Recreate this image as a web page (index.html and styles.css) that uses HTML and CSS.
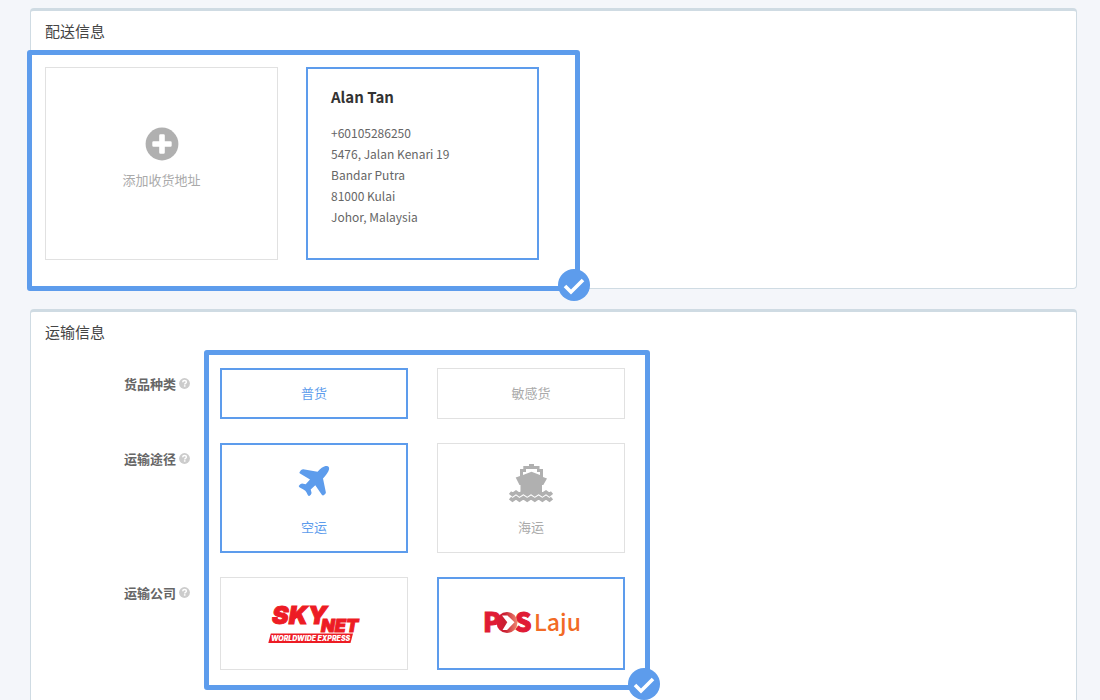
FILE: index.html
```html
<!DOCTYPE html>
<html lang="zh-CN">
<head>
<meta charset="utf-8">
<meta name="viewport" content="width=device-width, initial-scale=1">
<title>配送信息</title>
<link rel="stylesheet" href="styles.css">
</head>
<body>
<svg class="sprite" aria-hidden="true">
  <symbol id="check" viewBox="0 0 32 32"><path d="M7 17l6 6L25 11" fill="none" stroke="#fff" stroke-width="3.6"/></symbol>
  <symbol id="help" viewBox="0 0 11 11"><circle cx="5.500" cy="5.500" r="5.400" fill="#ccc"/><path d="M3.700 4.300q.1-1.700 1.900-1.700 1.800 0 1.800 1.500 0 .8-.9 1.300-.8.400-.8 1.100" fill="none" stroke="#fff" stroke-width="1.500"/><path d="M4.900 7.200h1.600v1.500H4.900z" fill="#fff"/></symbol>
</svg>
<main class="page">
  <section class="panel">
    <h2 class="panel-title">配送信息</h2>
    <div class="frame frame-address">
      <button type="button" class="option address add">
        <svg class="plus" viewBox="0 0 34 34" aria-hidden="true"><circle cx="17" cy="17" r="16.400" fill="#b0b0b0"/><path d="M14.200 8.500q0-1.200 1.200-1.200h3.200q1.200 0 1.200 1.200v5.700h5.700q1.200 0 1.200 1.200v3.200q0 1.200-1.200 1.200h-5.700v5.700q0 1.200-1.200 1.200h-3.200q-1.200 0-1.200-1.200v-5.700H8.500q-1.200 0-1.200-1.200v-3.200q0-1.200 1.200-1.200h5.700z" fill="#fff"/></svg>
        <span>添加收货地址</span>
      </button>
      <button type="button" class="option address details selected" aria-pressed="true">
        <strong class="name">Alan Tan</strong>
        <span>+60105286250</span>
        <span>5476, Jalan Kenari 19</span>
        <span>Bandar Putra</span>
        <span>81000 Kulai</span>
        <span>Johor, Malaysia</span>
      </button>
      <svg class="badge"><use href="#check"/></svg>
    </div>
  </section>

  <section class="panel">
    <h2 class="panel-title">运输信息</h2>
    <div class="shipping">
      <div class="rows labels">
        <div class="label">货品种类<svg class="help"><use href="#help"/></svg></div>
        <div class="label">运输途径<svg class="help"><use href="#help"/></svg></div>
        <div class="label">运输公司<svg class="help"><use href="#help"/></svg></div>
      </div>
      <div class="frame rows frame-shipping">
        <div class="choices" role="group" aria-label="货品种类">
          <button type="button" class="option goods selected" aria-pressed="true">普货</button>
          <button type="button" class="option goods" aria-pressed="false">敏感货</button>
        </div>
        <div class="choices" role="group" aria-label="运输途径">
          <button type="button" class="option transport selected" aria-pressed="true">
            <svg class="transport-icon" viewBox="-6 -2 44 40" aria-hidden="true"><path d="M1.500 7.300Q3 4 5.200 4.200L19.500 6.700Q24 1.800 27.500 1Q31.800 .3 31 4.500Q30 8 25 13.500L27.900 27.500Q28 29 25.200 30.500Q24.300 30.600 23.800 29.700L17.300 20.200L12.700 24.400L13.600 28Q13.200 30 11.300 31Q10.200 31 9.500 29.500Q8.700 27.200 7.300 25.800Q5.300 24 2.200 22.700Q.8 22 .7 21Q2.200 18.700 4 18.400L7.700 19.200L12 14.600L2 8.600Q1.200 8 1.500 7.300z" fill="#5d9cec"/></svg>
            <span>空运</span>
          </button>
          <button type="button" class="option transport" aria-pressed="false">
            <svg class="transport-icon" viewBox="0 0 44 40" aria-hidden="true"><path d="M20 1h5v2h5.500v3H34v8l4 1.500L34.300 22H33v9H11.500v-9h-1L6.700 14.500 11 13V6h3.300V3H20z" fill="#b0b0b0"/><path d="M14 12V9h3V6h11v3h3v3l-8.500-3.200z" fill="#fff"/><path d="M1 29.600l2.500 2 3.500-2.500 3.500 2.500 3.900-2.500 3.800 2.500 3.800-2.500 3.800 2.500 3.800-2.500 3.800 2.500 3.600-2.500 3.500 2.500 2.500-2M1 35.100l2.500 2 3.500-2.500 3.500 2.500 3.900-2.500 3.800 2.500 3.800-2.500 3.800 2.500 3.800-2.500 3.800 2.500 3.600-2.500 3.500 2.500 2.500-2" fill="none" stroke="#b0b0b0" stroke-width="3.600"/></svg>
            <span>海运</span>
          </button>
        </div>
        <div class="choices" role="group" aria-label="运输公司">
          <button type="button" class="option" aria-pressed="false">
            <svg class="skynet" viewBox="0 0 92 38" role="img" aria-label="SkyNet Worldwide Express">
              <text x="4" y="19" class="sky">SKY</text>
              <text x="53" y="27" class="net">NET</text>
              <path d="M2.800 28.500H85l-2.500 9.500H.3z" fill="#ed1c24"/>
              <text x="3" y="35.800" class="worldwide">WORLDWIDE EXPRESS</text>
            </svg>
          </button>
          <button type="button" class="option selected" aria-pressed="true">
            <svg class="poslaju" viewBox="0 0 96 30" role="img" aria-label="Pos Laju">
              <defs><linearGradient id="globe"><stop offset="0" stop-color="#e01b35"/><stop offset=".4" stop-color="#c81f32"/><stop offset="1" stop-color="#ee8a72"/></linearGradient></defs>
              <text x="0" y="23" class="pos">P</text>
              <text x="32" y="23" class="pos">S</text>
              <circle cx="24" cy="13.500" r="10.500" fill="url(#globe)"/>
              <path d="M19 6.500h5.500l7 6.700-7.500 7.800h-4.500l4.800-7.800z" fill="#fff"/>
              <text x="51" y="22" class="laju">Laju</text>
            </svg>
          </button>
        </div>
        <svg class="badge"><use href="#check"/></svg>
      </div>
    </div>
  </section>
</main>
</body>
</html>
```
FILE: styles.css
```css
* {
  box-sizing: border-box;
}

body {
  margin: 0;
  background: #f4f6fa;
  color: #666;
  font-family: "Noto Sans CJK SC", sans-serif;
  font-size: 13px;
  line-height: 21px;
}

.sprite {
  display: none;
}

.page {
  display: flex;
  flex-direction: column;
  gap: 20px;
  padding: 8px 23px 20px 30px;
}

.panel {
  border: 1px solid #cfdbe3;
  border-top-width: 3px;
  border-radius: 4px;
  background: #fff;
}

.panel-title {
  margin: 0;
  padding: 10px 14px 9px;
  color: #444;
  font-size: 15px;
  font-weight: 400;
  line-height: 20px;
}

.panel + .panel .panel-title {
  padding-bottom: 8px;
}

.frame {
  position: relative;
  border: 5px solid #5d9cec;
  border-radius: 3px;
}

.frame-address {
  display: flex;
  gap: 28px;
  width: fit-content;
  margin: 0 0 -3px -4px;
  padding: 12px 36px 26px 13px;
}

.badge {
  position: absolute;
  right: -15px;
  bottom: -15px;
  width: 32px;
  height: 32px;
  border-radius: 50%;
  background: #5d9cec;
}

.option {
  display: flex;
  align-items: center;
  justify-content: center;
  margin: 0;
  padding: 0;
  border: 1px solid #e1e1e1;
  background: #fff;
  color: #aaa;
  font: inherit;
  cursor: pointer;
}

.option.selected {
  border: 2px solid #5d9cec;
  color: #5d9cec;
}

.address {
  flex-direction: column;
  width: 233px;
  min-height: 193px;
}

.add {
  gap: 8px;
  padding-bottom: 10px;
}

.plus {
  width: 34px;
  height: 34px;
}

.option.details {
  align-items: flex-start;
  justify-content: flex-start;
  padding: 16px 23px;
  color: #666;
  font-size: 12px;
  text-align: left;
}

.name {
  margin-bottom: 13px;
  color: #333;
  font-size: 15px;
  font-weight: 700;
  line-height: 24px;
}

.shipping {
  display: flex;
  gap: 14px;
  padding: 0 14px 24px 93px;
}

.rows {
  display: grid;
  grid-template-rows: 51px 110px 93px;
  row-gap: 24px;
}

.labels {
  padding-top: 17px;
}

.label {
  display: flex;
  align-items: center;
  gap: 3px;
  height: 32px;
  font-weight: 700;
}

.help {
  width: 11px;
  height: 11px;
}

.frame-shipping {
  padding: 13px 20px 15px 11px;
}

.choices {
  display: grid;
  grid-template-columns: 188px 188px;
  column-gap: 29px;
}

.goods {
  padding-bottom: 3px;
}

.transport {
  flex-direction: column;
  gap: 13px;
  padding-top: 3px;
}

.transport-icon {
  width: 44px;
  height: 40px;
}

.skynet {
  width: 92px;
  height: 38px;
  overflow: visible;
}

.poslaju {
  width: 96px;
  height: 30px;
  overflow: visible;
}

.sky,
.net {
  fill: #ed1c24;
  stroke: #ed1c24;
  font-family: Inter, sans-serif;
  font-style: italic;
  font-weight: 900;
}

.sky {
  font-size: 25px;
}

.net {
  font-size: 18px;
}

.worldwide {
  fill: #fff;
  font-family: Inter, sans-serif;
  font-size: 7px;
  font-style: italic;
  font-weight: 900;
}

.pos {
  fill: #e01b35;
  stroke: #e01b35;
  font-family: "Noto Sans CJK SC", sans-serif;
  font-size: 26px;
  font-weight: 900;
}

.laju {
  fill: #f26a25;
  font-family: "Noto Sans CJK SC", sans-serif;
  font-size: 23px;
  font-weight: 500;
}
```
